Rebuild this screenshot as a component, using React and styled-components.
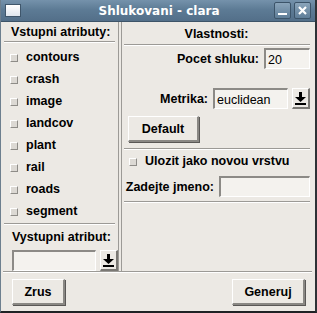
import styled, { createGlobalStyle } from 'styled-components';

const GlobalStyle = createGlobalStyle`
  html, body { margin: 0; padding: 0; background: #ece9e4; }
  * { box-sizing: border-box; }
`;

const attributes = ['contours', 'crash', 'image', 'landcov', 'plant', 'rail', 'roads', 'segment'];

const Window = styled.div`
  width: 317px;
  height: 313px;
  display: flex;
  flex-direction: column;
  background: #ece9e4;
  font-family: 'Liberation Sans', Arial, sans-serif;
  font-size: 12px;
  font-weight: bold;
  color: #000;
  border-left: 1px solid #6d7f8e;
  border-right: 2px solid #2e3236;
  border-bottom: 2px solid #1f2225;
`;

const TitleBar = styled.div`
  height: 22px;
  flex: none;
  display: flex;
  align-items: center;
  padding: 0 4px 0 4px;
  background: linear-gradient(#7592ab, #5d7b95 45%, #536f89);
  border-bottom: 1px solid #3d5468;
`;

const AppIcon = styled.div`
  width: 16px;
  height: 13px;
  background: linear-gradient(#ffffff, #dfe6ee);
  border: 1px solid #3f566b;
`;

const Title = styled.div`
  flex: 1;
  text-align: center;
  color: #fff;
  font-family: 'DejaVu Sans', sans-serif;
  font-size: 12px;
  font-weight: bold;
  padding-left: 26px;
`;

const TitleButton = styled.div`
  width: 17px;
  height: 17px;
  margin-left: 3px;
  border: 1px solid #3c5469;
  border-radius: 2px;
  background: linear-gradient(#8aa4ba, #5f7e98);
  display: flex;
  align-items: center;
  justify-content: center;
`;

const Body = styled.div`
  display: flex;
  height: 249px;
  flex: none;
`;

const LeftPanel = styled.div`
  width: 118px;
  display: flex;
  flex-direction: column;
  border-right: 1px solid #9c9a96;
`;

const RightPanel = styled.div`
  flex: 1;
  display: flex;
  flex-direction: column;
  margin-left: 2px;
  border-left: 1px solid #9c9a96;
  padding: 0 5px 0 1px;
`;

const Header = styled.div`
  height: 22px;
  display: flex;
  align-items: center;
  justify-content: ${({ center }) => (center ? 'center' : 'flex-start')};
  padding-left: ${({ center }) => (center ? '0' : '10px')};
  padding-top: 1px;
  font-size: 12.5px;
`;

const Separator = styled.div`
  height: 2px;
  flex: none;
  border-top: 1px solid #9c9a96;
  border-bottom: 1px solid #ffffff;
  margin: ${({ m }) => m || '0 3px'};
`;

const CheckList = styled.div`
  display: flex;
  flex-direction: column;
  padding-top: 3px;
`;

const CheckRow = styled.label`
  height: 22px;
  display: flex;
  align-items: center;
  padding-left: ${({ indent }) => indent || 9}px;
  gap: 8px;
  font-size: 12.5px;
`;

const Box = styled.span`
  width: 8px;
  height: 8px;
  margin-top: 2px;
  background: #dcd9d4;
  border-top: 1px solid #ffffff;
  border-left: 1px solid #ffffff;
  border-right: 1px solid #8e8c88;
  border-bottom: 1px solid #8e8c88;
`;

const Label = styled.div`
  font-size: 12.5px;
  padding: ${({ p }) => p || '0'};
`;

const Combo = styled.div`
  display: flex;
  align-items: center;
  gap: 4px;
  margin: ${({ m }) => m || '0'};
`;

const Input = styled.div`
  width: ${({ w }) => w}px;
  height: 21px;
  background: #f4f2ee;
  border-top: 2px solid #8c8a86;
  border-left: 2px solid #8c8a86;
  border-right: 1px solid #ffffff;
  border-bottom: 1px solid #ffffff;
  font-weight: normal;
  font-size: 12.5px;
  padding: 1px 3px 0 2px;
  display: flex;
  align-items: center;
`;

const ArrowButton = styled.div`
  width: 18px;
  height: 21px;
  background: #ece9e4;
  border-top: 1px solid #ffffff;
  border-left: 1px solid #ffffff;
  border-right: 2px solid #7a7874;
  border-bottom: 2px solid #7a7874;
  display: flex;
  align-items: center;
  justify-content: center;
`;

const FieldRow = styled.div`
  display: flex;
  align-items: center;
  justify-content: ${({ start }) => (start ? 'flex-start' : 'flex-end')};
  gap: 5px;
  margin: ${({ m }) => m || '0'};
`;

const Button = styled.div`
  width: ${({ w }) => w}px;
  height: 26px;
  display: flex;
  align-items: center;
  justify-content: center;
  font-size: 12.5px;
  background: #ece9e4;
  border-top: 1px solid #ffffff;
  border-left: 1px solid #ffffff;
  border-right: 2px solid #8a8884;
  border-bottom: 2px solid #8a8884;
  box-shadow: 1px 1px 0 #5a5856;
`;

const Spacer = styled.div`
  flex: 1;
`;

const Footer = styled.div`
  flex: 1;
  display: flex;
  justify-content: space-between;
  align-items: flex-start;
  padding: 6px 10px 0 11px;
`;

function DownArrow() {
  return (
    <svg width="11" height="13" viewBox="0 0 11 13">
      <rect x="4" y="0" width="3" height="5" fill="#000" />
      <polygon points="0,5 11,5 5.5,10" fill="#000" />
      <rect x="0" y="11" width="11" height="2" fill="#000" />
    </svg>
  );
}

export default function App() {
  return (
    <>
      <GlobalStyle />
      <Window>
        <TitleBar>
          <AppIcon />
          <Title>Shlukovani - clara</Title>
          <TitleButton>
            <svg width="11" height="11" viewBox="0 0 11 11">
              <rect x="1" y="8" width="9" height="2" fill="#fff" />
            </svg>
          </TitleButton>
          <TitleButton>
            <svg width="11" height="11" viewBox="0 0 11 11">
              <path d="M2 2 L9 9 M9 2 L2 9" stroke="#fff" strokeWidth="2.2" />
            </svg>
          </TitleButton>
        </TitleBar>
        <Body>
          <LeftPanel>
            <Header>Vstupni atributy:</Header>
            <Separator />
            <CheckList>
              {attributes.map((a) => (
                <CheckRow key={a}>
                  <Box />
                  {a}
                </CheckRow>
              ))}
            </CheckList>
            <Separator m="1px 3px 0" />
            <Label p="5px 0 0 11px">Vystupni atribut:</Label>
            <Combo m="6px 0 0 11px">
              <Input w={84} />
              <ArrowButton>
                <DownArrow />
              </ArrowButton>
            </Combo>
          </LeftPanel>
          <RightPanel>
            <Header center>Vlastnosti:</Header>
            <Separator m="0 0 0 1px" />
            <FieldRow m="2px 0 0">
              <Label>Pocet shluku:</Label>
              <Input w={46}>20</Input>
            </FieldRow>
            <FieldRow m="19px 0 0">
              <Label>Metrika:</Label>
              <Combo>
                <Input w={75}>euclidean</Input>
                <ArrowButton>
                  <DownArrow />
                </ArrowButton>
              </Combo>
            </FieldRow>
            <FieldRow m="7px 0 0 5px" start>
              <Button w={71}>Default</Button>
            </FieldRow>
            <Separator m="6px 0 0 1px" />
            <CheckRow indent={6}>
              <Box />
              Ulozit jako novou vrstvu
            </CheckRow>
            <FieldRow m="4px 0 0">
              <Label>Zadejte jmeno:</Label>
              <Input w={91} />
            </FieldRow>
            <Separator m="4px 0 0 1px" />
            <Spacer />
          </RightPanel>
        </Body>
        <Separator m="0 3px 0 2px" />
        <Footer>
          <Button w={53}>Zrus</Button>
          <Button w={73}>Generuj</Button>
        </Footer>
      </Window>
    </>
  );
}
